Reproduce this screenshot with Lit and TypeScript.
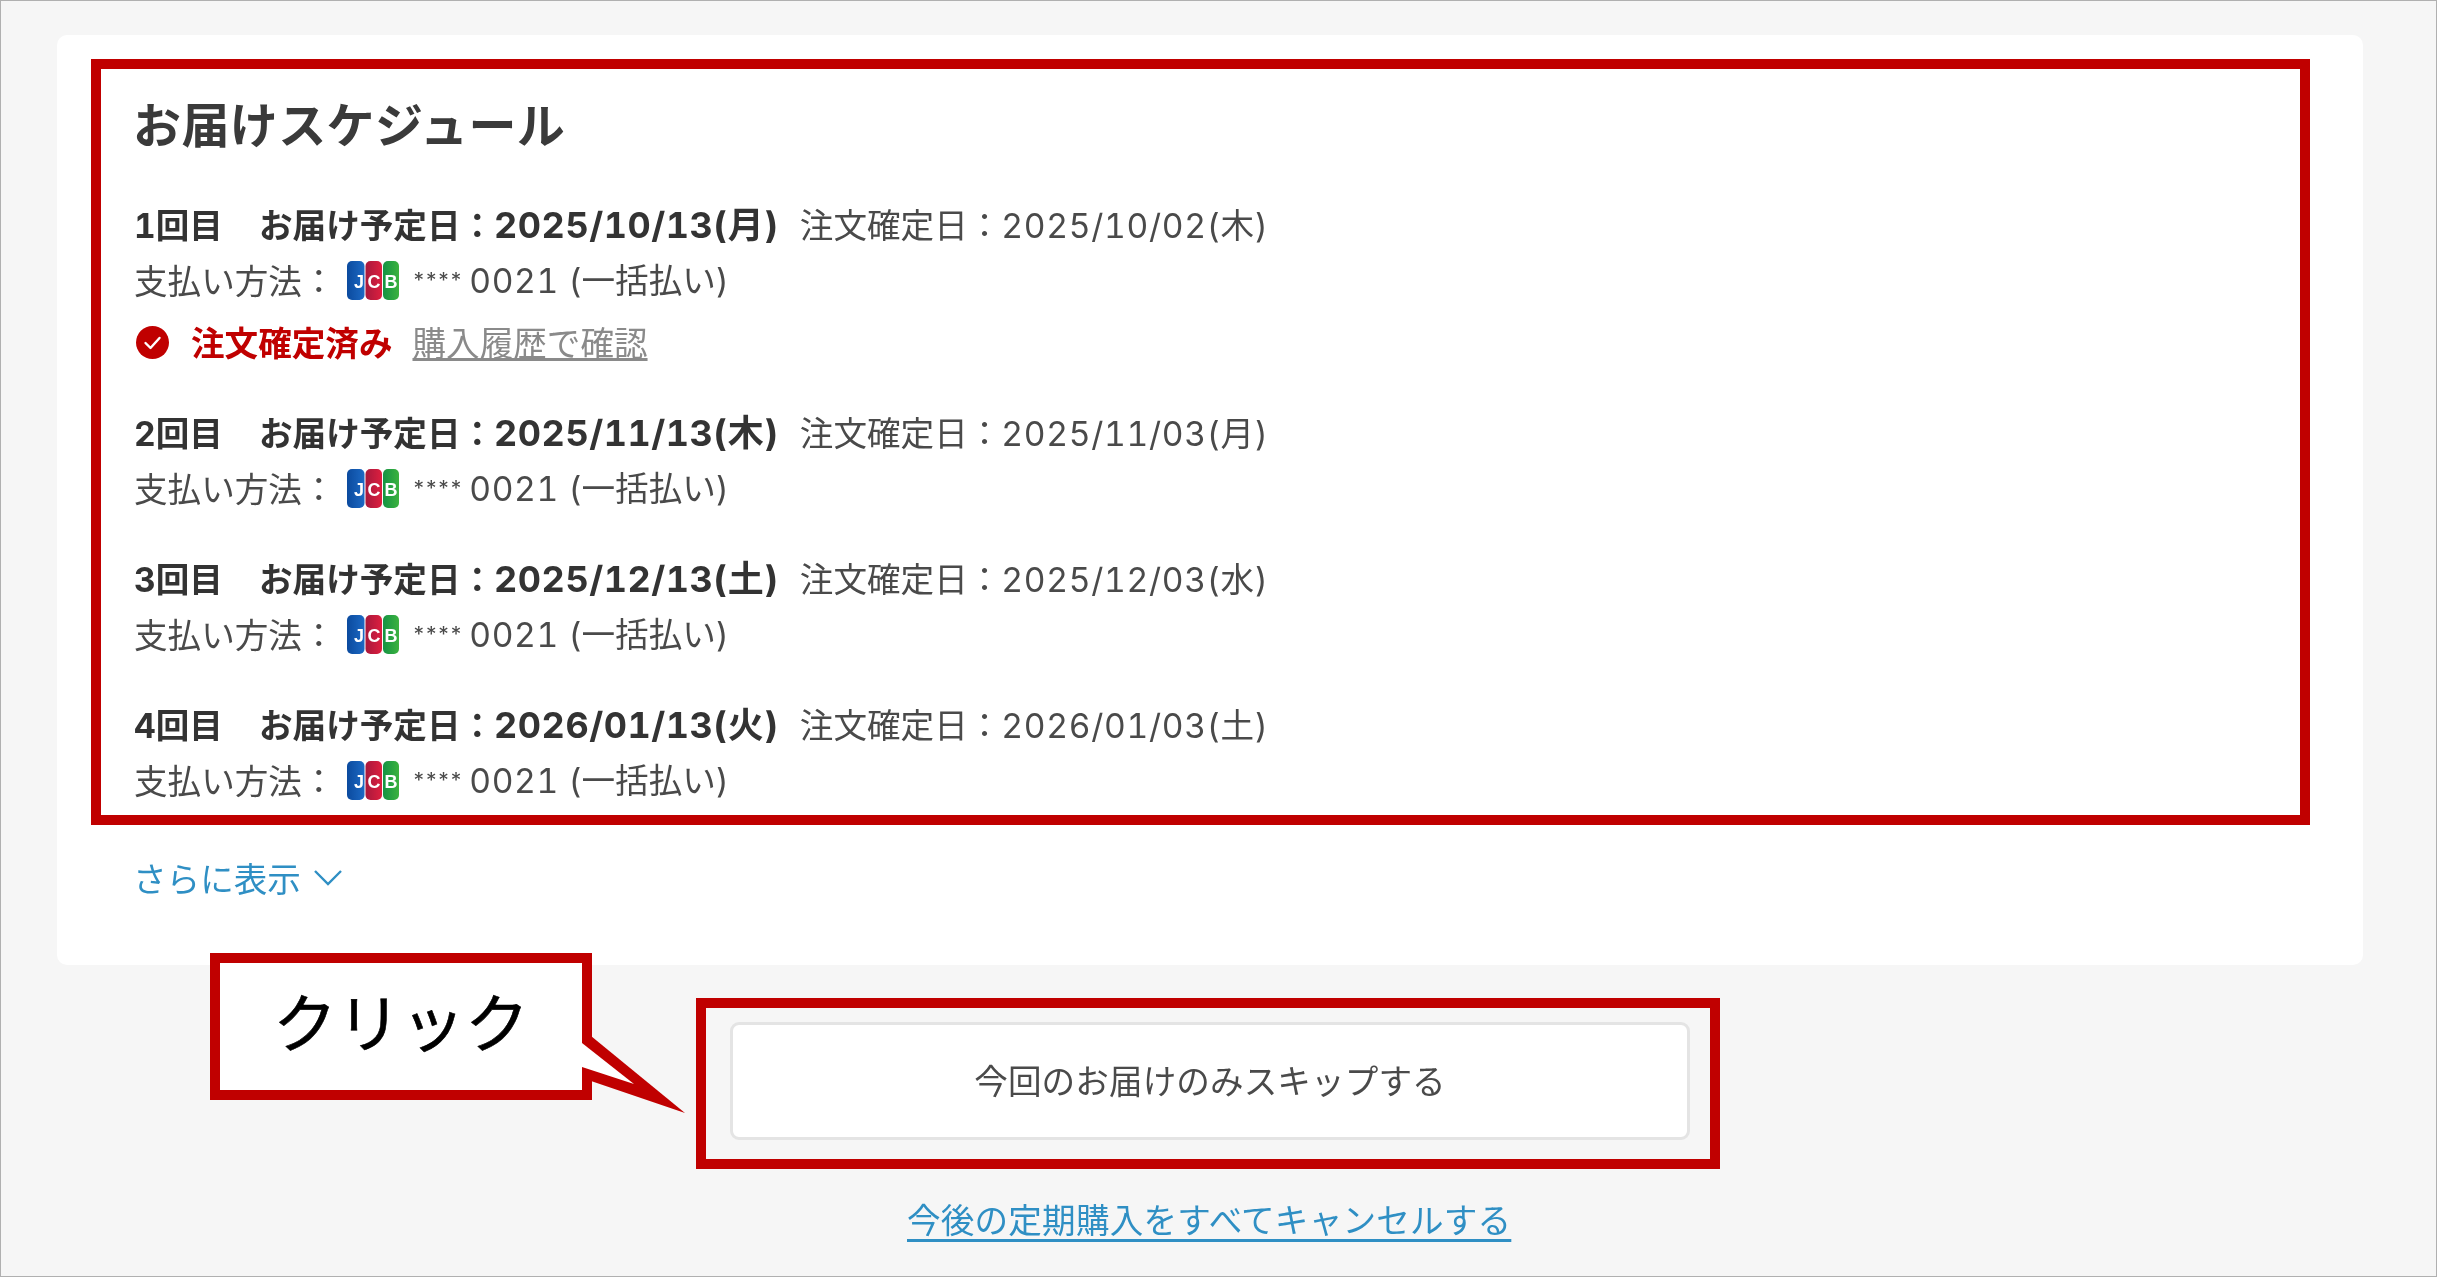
import { LitElement, html, css } from "lit";
import { customElement } from "lit/decorators.js";

const rows = [
  { n: "1", d: "2025/10/13", dw: "月", c: "2025/10/02", cw: "木", done: true },
  { n: "2", d: "2025/11/13", dw: "木", c: "2025/11/03", cw: "月", done: false },
  { n: "3", d: "2025/12/13", dw: "土", c: "2025/12/03", cw: "水", done: false },
  { n: "4", d: "2026/01/13", dw: "火", c: "2026/01/03", cw: "土", done: false },
];

const jcb = html`<svg class="jcb" viewBox="0 0 52 39" aria-hidden="true">
  <defs>
    <linearGradient id="jb" x1="0" x2="1" y1="0" y2="0"><stop offset="0" stop-color="#0b4a9e"/><stop offset="1" stop-color="#1c69c4"/></linearGradient>
    <linearGradient id="jr" x1="0" x2="1" y1="0" y2="0"><stop offset="0" stop-color="#a8183c"/><stop offset="1" stop-color="#dd1f3f"/></linearGradient>
    <linearGradient id="jg" x1="0" x2="1" y1="0" y2="0"><stop offset="0" stop-color="#159344"/><stop offset="1" stop-color="#3cb23f"/></linearGradient>
  </defs>
  <rect x="0" y="0" width="17.5" height="39" rx="5" fill="url(#jb)"/>
  <rect x="18.5" y="0" width="16.5" height="39" rx="5" fill="url(#jr)"/>
  <rect x="36" y="0" width="16" height="39" rx="5" fill="url(#jg)"/>
  <g fill="#fff" font-family="'Liberation Sans',sans-serif" font-weight="700" font-size="18" text-anchor="middle">
    <text x="12" y="27">J</text><text x="27" y="27">C</text><text x="44" y="27">B</text>
  </g>
</svg>`;

const check = html`<svg class="check" viewBox="0 0 33 33" aria-hidden="true">
  <circle cx="16.5" cy="16.5" r="16.5" fill="#c00000"/>
  <path d="M9.5 17l5 5 9-10" fill="none" stroke="#fff" stroke-width="2.4" stroke-linecap="round" stroke-linejoin="round"/>
</svg>`;

@customElement("app-root")
export class AppRoot extends LitElement {
  static styles = css`
    :host {
      display: block;
      font-family: "Noto Sans CJK JP", sans-serif;
      font-size: 33.6px;
      color: #4a4a4a;
    }
    .page {
      position: relative;
      box-sizing: border-box;
      width: 2437px;
      height: 1277px;
      border: 1px solid #b0b0b0;
      background: #f6f6f6;
      padding: 34px 0 0 56px;
      overflow: hidden;
    }
    .card {
      box-sizing: border-box;
      width: 2306px;
      height: 930px;
      background: #fff;
      border-radius: 10px;
      padding: 24px 0 0 34px;
    }
    .mark {
      box-sizing: border-box;
      border: 10px solid #c00000;
    }
    .schedule {
      width: 2219px;
      height: 766px;
      padding: 20px 0 0 33px;
    }
    h2 {
      margin: 0 0 37px -1px;
      font-size: 48px;
      line-height: 66px;
      height: 70px;
      font-weight: 700;
      color: #3a3a3a;
      letter-spacing: 0.4px;
      filter: blur(0.6px);
    }
    .item {
      margin-top: 34px;
    }
    .item.first {
      margin-top: 0;
    }
    .line {
      display: flex;
      align-items: center;
      height: 56px;
      line-height: 56px;
      white-space: nowrap;
      filter: blur(0.6px);
    }
    .head {
      align-items: baseline;
    }
    .num {
      width: 125px;
      font-weight: 700;
      color: #333;
    }
    .strong {
      font-weight: 700;
      color: #333;
    }
    .lat {
      font-family: "Inter", "Noto Sans CJK JP", sans-serif;
      font-variant-numeric: tabular-nums;
    }
    .date {
      font-size: 36px;
      letter-spacing: 0.5px;
      margin-right: 21px;
    }
    .label {
      width: 213px;
    }
    .jcb {
      width: 52px;
      height: 39px;
      margin-right: 13px;
      flex: none;
    }
    .stars {
      font-size: 21px;
      letter-spacing: -1.2px;
      vertical-align: 5px;
    }
    .digits {
      letter-spacing: 0.6px;
      margin: 0 0 0 -2px;
    }
    .conf {
      letter-spacing: 0.7px;
    }
    .status {
      margin-top: 6px;
    }
    .check {
      width: 33px;
      height: 33px;
      margin: 0 2px;
      flex: none;
    }
    .done {
      margin-left: 20px;
      margin-right: 20px;
      font-weight: 700;
      color: #c00000;
    }
    .history {
      color: #8a8a8a;
      text-decoration: underline;
    }
    .more {
      display: flex;
      align-items: center;
      margin: 24px 0 0 42px;
      height: 56px;
      color: #2f8fc4;
      filter: blur(0.6px);
    }
    .more svg {
      width: 30px;
      height: 17px;
      margin-left: 12px;
    }
    .actions {
      display: flex;
      flex-direction: column;
      align-items: flex-start;
      margin-top: 33px;
      padding-left: 639px;
    }
    .skip {
      width: 1024px;
      height: 171px;
      padding: 14px 20px 19px 24px;
    }
    .skip button {
      display: block;
      box-sizing: border-box;
      width: 100%;
      height: 100%;
      background: #fff;
      border: 3px solid #e4e4e4;
      border-radius: 9px;
      font: inherit;
      letter-spacing: 0.1px;
      color: #4a4a4a;
      padding: 0 0 3px;
    }
    .skip button span {
      display: block;
      filter: blur(0.6px);
    }
    .cancel {
      align-self: flex-start;
      margin: 22px 0 0 211px;
      line-height: 56px;
      letter-spacing: 0.2px;
      color: #2f8fc4;
      text-decoration: underline;
      text-decoration-thickness: 3px;
      text-underline-offset: 6px;
      filter: blur(0.6px);
    }
    .callout {
      position: absolute;
      left: 209px;
      top: 952px;
      box-sizing: border-box;
      width: 382px;
      height: 147px;
      padding-bottom: 15px;
      background: #fff;
      display: flex;
      align-items: center;
      justify-content: center;
      font-size: 64px;
      color: #000;
      line-height: 1;
      -webkit-text-stroke: 0.6px #000;
    }
    .tail {
      position: absolute;
      left: 362px;
      top: 73px;
      width: 106px;
      height: 90px;
    }
  `;

  render() {
    return html`<div class="page">
      <section class="card">
        <div class="mark schedule">
          <h2>お届けスケジュール</h2>
          ${rows.map(
            (r) => html`<div class="item ${r.done ? "first" : ""}">
              <div class="line head">
                <span class="num"><span class="lat">${r.n}</span>回目</span>
                <span class="strong">お届け予定日：</span>
                <span class="strong date lat">${r.d}(${r.dw})</span>
                <span>注文確定日：</span><span class="lat conf">${r.c}(${r.cw})</span>
              </div>
              <div class="line">
                <span class="label">支払い方法：</span>
                ${jcb}
                <span><span class="lat stars">****</span><span class="lat digits"> 0021 </span><span class="lat">(</span>一括払い<span class="lat">)</span></span>
              </div>
              ${r.done
                ? html`<div class="line status">
                    ${check}
                    <span class="done">注文確定済み</span>
                    <span class="history">購入履歴で確認</span>
                  </div>`
                : ""}
            </div>`
          )}
        </div>
        <div class="more">
          さらに表示
          <svg viewBox="0 0 30 17" aria-hidden="true"><path d="M2 2l13 13L28 2" fill="none" stroke="#2f8fc4" stroke-width="2.4"/></svg>
        </div>
      </section>
      <div class="actions">
        <div class="mark skip"><button><span>今回のお届けのみスキップする</span></button></div>
        <div class="cancel">今後の定期購入をすべてキャンセルする</div>
      </div>
      <div class="mark callout">
        クリック
        <svg class="tail" viewBox="0 0 106 90" aria-hidden="true">
          <polygon points="9,0 103,77 9,45" fill="#c00000"/>
          <polygon points="0,7 52,48 0,31" fill="#fff"/>
        </svg>
      </div>
    </div>`;
  }
}
